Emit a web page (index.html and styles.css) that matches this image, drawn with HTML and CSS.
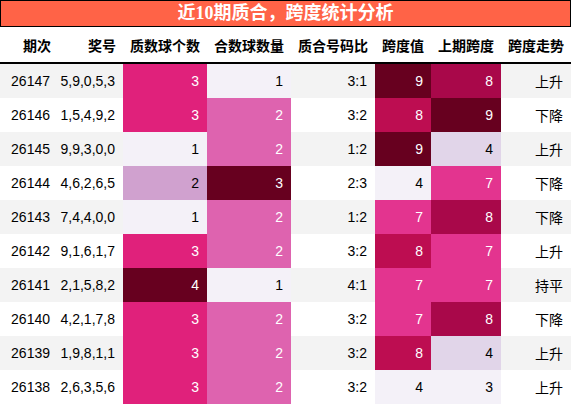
FILE: index.html
```html
<!DOCTYPE html>
<html lang="zh-CN">
<head>
    <meta charset="UTF-8">
    <title>近10期质合，跨度统计分析</title>
    <link rel="stylesheet" href="styles.css">
</head>
<body>
    <div class="page">
        <div class="title">近10期质合，跨度统计分析</div>
        <table class="stats">
            <colgroup>
                <col style="width:58px">
                <col style="width:65px">
                <col style="width:84px">
                <col style="width:84px">
                <col style="width:84px">
                <col style="width:56px">
                <col style="width:70px">
                <col style="width:70px">
            </colgroup>
            <thead>
                <tr>
                    <th>期次</th>
                    <th>奖号</th>
                    <th>质数球个数</th>
                    <th>合数球数量</th>
                    <th>质合号码比</th>
                    <th>跨度值</th>
                    <th>上期跨度</th>
                    <th>跨度走势</th>
                </tr>
            </thead>
            <tbody>
                <tr>
                    <td>26147</td><td>5,9,0,5,3</td>
                    <td class="h-pink">3</td><td class="h-pale">1</td>
                    <td>3:1</td>
                    <td class="h-dark">9</td><td class="h-wine">8</td>
                    <td>上升</td>
                </tr>
                <tr>
                    <td>26146</td><td>1,5,4,9,2</td>
                    <td class="h-pink">3</td><td class="h-rose">2</td>
                    <td>3:2</td>
                    <td class="h-crimson">8</td><td class="h-dark">9</td>
                    <td>下降</td>
                </tr>
                <tr>
                    <td>26145</td><td>9,9,3,0,0</td>
                    <td class="h-pale">1</td><td class="h-rose">2</td>
                    <td>1:2</td>
                    <td class="h-dark">9</td><td class="h-mist">4</td>
                    <td>上升</td>
                </tr>
                <tr>
                    <td>26144</td><td>4,6,2,6,5</td>
                    <td class="h-lilac">2</td><td class="h-dark">3</td>
                    <td>2:3</td>
                    <td class="h-pale">4</td><td class="h-hot">7</td>
                    <td>下降</td>
                </tr>
                <tr>
                    <td>26143</td><td>7,4,4,0,0</td>
                    <td class="h-pale">1</td><td class="h-rose">2</td>
                    <td>1:2</td>
                    <td class="h-hot">7</td><td class="h-wine">8</td>
                    <td>下降</td>
                </tr>
                <tr>
                    <td>26142</td><td>9,1,6,1,7</td>
                    <td class="h-pink">3</td><td class="h-rose">2</td>
                    <td>3:2</td>
                    <td class="h-crimson">8</td><td class="h-hot">7</td>
                    <td>上升</td>
                </tr>
                <tr>
                    <td>26141</td><td>2,1,5,8,2</td>
                    <td class="h-dark">4</td><td class="h-pale">1</td>
                    <td>4:1</td>
                    <td class="h-hot">7</td><td class="h-hot">7</td>
                    <td>持平</td>
                </tr>
                <tr>
                    <td>26140</td><td>4,2,1,7,8</td>
                    <td class="h-pink">3</td><td class="h-rose">2</td>
                    <td>3:2</td>
                    <td class="h-hot">7</td><td class="h-wine">8</td>
                    <td>下降</td>
                </tr>
                <tr>
                    <td>26139</td><td>1,9,8,1,1</td>
                    <td class="h-pink">3</td><td class="h-rose">2</td>
                    <td>3:2</td>
                    <td class="h-crimson">8</td><td class="h-mist">4</td>
                    <td>上升</td>
                </tr>
                <tr>
                    <td>26138</td><td>2,6,3,5,6</td>
                    <td class="h-pink">3</td><td class="h-rose">2</td>
                    <td>3:2</td>
                    <td class="h-pale">4</td><td class="h-pale">3</td>
                    <td>上升</td>
                </tr>
            </tbody>
        </table>
    </div>
</body>
</html>
```

FILE: styles.css
```css
body {
    margin: 0;
    padding: 0;
    background: #fff;
    font-family: "Liberation Sans", "Noto Sans CJK SC", sans-serif;
    color: #000;
}
.page {
    width: 571px;
}
.title {
    height: 25px;
    line-height: 25px;
    border: 1px solid #000;
    background: #ff6347;
    color: #fff;
    text-align: center;
    font-family: "Liberation Serif", "Noto Sans CJK SC", serif;
    font-weight: bold;
    font-size: 18px;
}
.stats {
    width: 571px;
    border-collapse: collapse;
    table-layout: fixed;
    font-size: 14px;
}
.stats th {
    height: 35px;
    padding: 0 7px 0 0;
    text-align: right;
    font-weight: bold;
    font-size: 14px;
    border-bottom: 2px solid #000;
}
.stats td {
    height: 34px;
    padding: 0 8px 0 0;
    text-align: right;
}
.stats tbody tr:nth-child(odd) {
    background: #f3f3f3;
}
.h-pale { background: #f4f1f8; }
.h-mist { background: #e1d5e9; }
.h-lilac { background: #d0a1cf; }
.h-rose { background: #de63af; color: #fff; }
.h-hot { background: #e3348f; color: #fff; }
.h-pink { background: #e0217b; color: #fff; }
.h-crimson { background: #bd0d51; color: #fff; }
.h-wine { background: #a9084a; color: #fff; }
.h-dark { background: #67001f; color: #fff; }
```
